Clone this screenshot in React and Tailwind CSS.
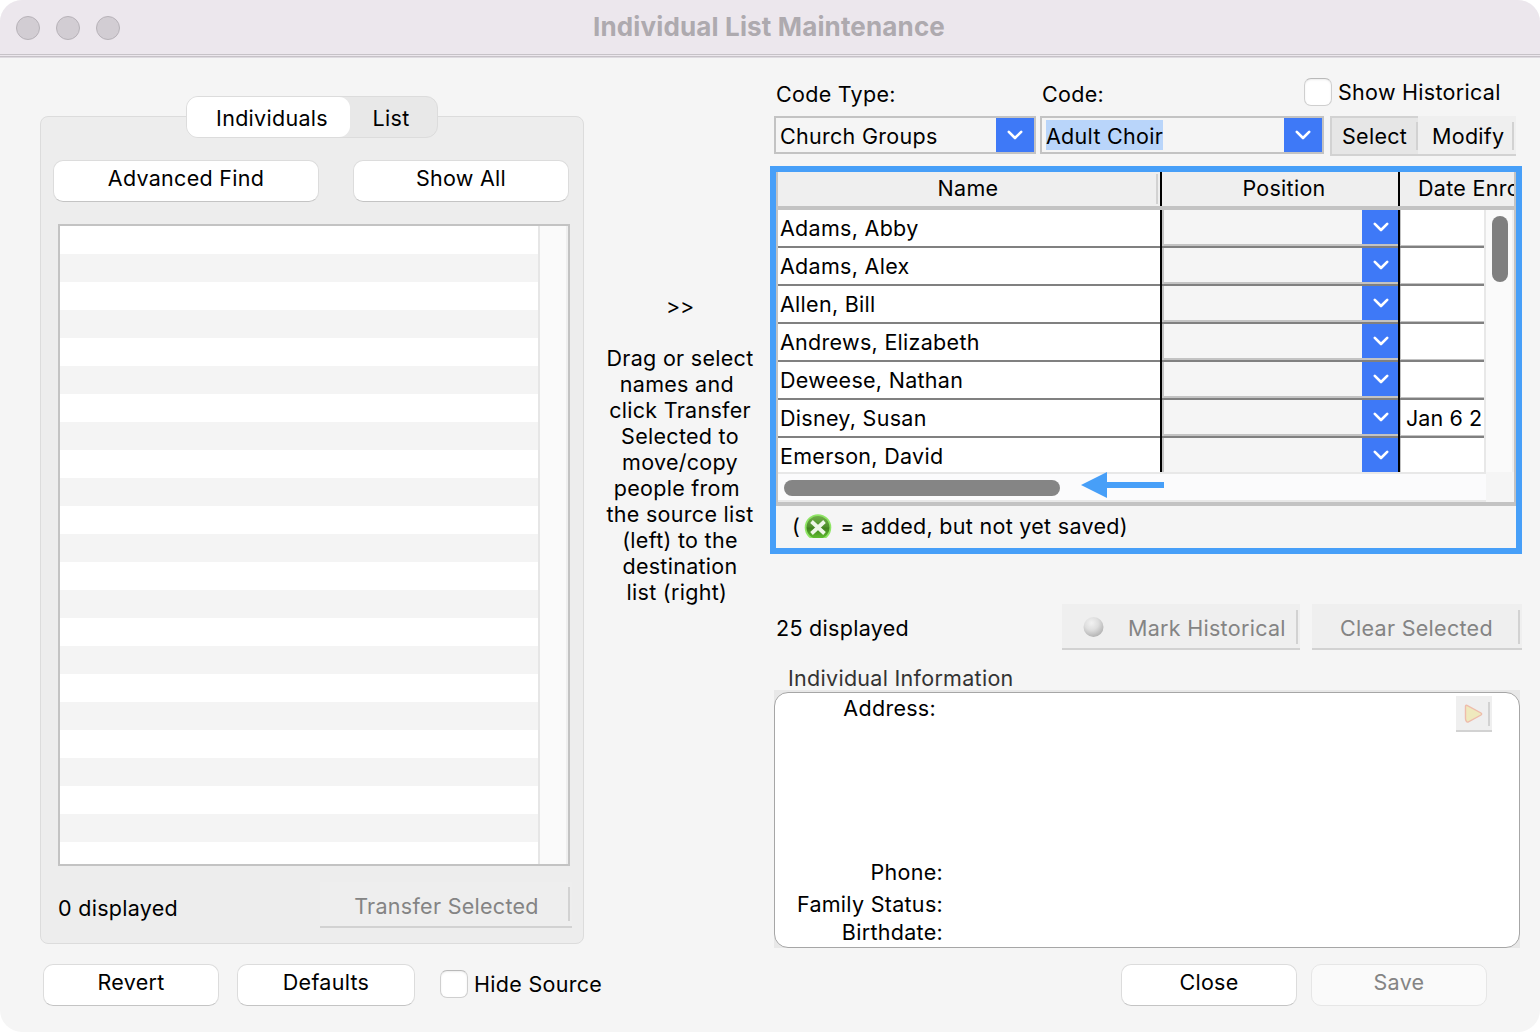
import React from "react";

const people = [
  { name: "Adams, Abby", date: "" },
  { name: "Adams, Alex", date: "" },
  { name: "Allen, Bill", date: "" },
  { name: "Andrews, Elizabeth", date: "" },
  { name: "Deweese, Nathan", date: "" },
  { name: "Disney, Susan", date: "Jan 6 2" },
  { name: "Emerson, David", date: "" },
];

const hint = [
  "Drag or select",
  "names and ",
  "click Transfer",
  "Selected to",
  "move/copy",
  "people from ",
  "the source list",
  "(left) to the",
  "destination",
  "list (right) ",
];

function Chevron() {
  return (
    <svg width="16" height="10" viewBox="0 0 16 10" fill="none" className="block">
      <path d="M1.8 1.8 L8 8 L14.2 1.8" stroke="#fff" strokeWidth="2.6" strokeLinecap="round" strokeLinejoin="round" />
    </svg>
  );
}

function PushButton({ children, className, disabled }) {
  return (
    <button
      className={`flex h-[42px] justify-center rounded-[10px] border pt-[3px] leading-[28px] ${
        disabled
          ? "border-[#e6e6e6] bg-[#fafafa] text-[#848484]"
          : "border-[#dcdcdc] border-b-[#c4c4c4] bg-white text-black"
      } ${className}`}
    >
      {children}
    </button>
  );
}

function Checkbox({ label, className }) {
  return (
    <label className={`flex items-center gap-[6px] ${className}`}>
      <span className="size-7 shrink-0 rounded-[7px] border border-[#cfcfcf] border-t-[#b9b9b9] bg-white shadow-[inset_0_1px_2px_rgba(0,0,0,0.08)]" />
      <span>{label}</span>
    </label>
  );
}

function FlatButton({ children, className, lineClass }) {
  return (
    <button className={`flex items-center justify-between border-b-2 border-[#d2d2d2] bg-[#efefef] text-[#848484] ${className}`}>
      {children}
      <span className={`w-[2px] shrink-0 bg-[#d2d2d2] ${lineClass}`} />
    </button>
  );
}

function Combo({ children, className }) {
  return (
    <div className={`flex h-[38px] border-2 border-[#c3c3c3] bg-[#f5f5f5] ${className}`}>
      <div className="flex flex-1 items-center pt-[2px] pl-[4px]">{children}</div>
      <div className="flex w-[38px] items-center justify-center bg-[#3e79f7]">
        <Chevron />
      </div>
    </div>
  );
}

function SourcePanel() {
  return (
    <section className="ml-10 w-[544px] shrink-0 pt-[38px]">
      <div className="relative ml-[146px] flex h-[42px] w-[252px] rounded-[12px] border border-[#dcdcdc] bg-[#e8e8e8] leading-[42px]">
        <div className="w-[163px] rounded-[11px] bg-white pl-[7px] text-center">Individuals</div>
        <div className="w-[82px] text-center">List</div>
      </div>
      <div className="-mt-[22px] h-[828px] rounded-[8px] border border-[#dcdcdc] bg-[#ededed] pt-[43px]">
        <div className="ml-3 flex gap-[34px]">
          <PushButton className="w-[266px]">Advanced Find</PushButton>
          <PushButton className="w-[216px]">Show All</PushButton>
        </div>
        <div className="mt-[22px] ml-[17px] flex h-[642px] w-[512px] border-2 border-[#c3c3c3]">
          <div className="flex-1 overflow-hidden">
            {Array.from({ length: 23 }, (_, i) => (
              <div key={i} className="h-7 odd:bg-white even:bg-[#f4f4f4]" />
            ))}
          </div>
          <div className="w-[30px] border-r-2 border-l-2 border-[#e6e6e6] border-r-[#efefef] bg-[#fafafa]" />
        </div>
        <div className="mt-[16px] ml-[17px] flex h-[46px] items-center justify-between pr-[11px]">
          <span className="mt-[7px]">0 displayed</span>
          <button className="flex h-[46px] w-[252px] items-center justify-between border-b-2 border-[#d2d2d2] bg-[#eeeeee] pr-[2px] text-[#848484]">
            <span className="flex-1 pt-[5px] pl-[5px] text-center">Transfer Selected</span>
            <span className="h-[34px] w-[2px] bg-[#d2d2d2]" />
          </button>
        </div>
      </div>
    </section>
  );
}

function Hint() {
  return (
    <section className="w-[190px] shrink-0 pt-[235px] pl-[2px] text-center leading-[26px]">
      <div className="tracking-[-0.3px]">&gt;&gt;</div>
      <div className="mt-[26px] whitespace-pre">
        {hint.map((line) => (
          <div key={line} className="-mx-5">{line}</div>
        ))}
      </div>
    </section>
  );
}

function CodeTable() {
  return (
    <div className="relative -ml-1 mt-[10px] h-[388px] w-[752px] border-6 border-[#479ff8] bg-[#f5f5f5]">
      <div className="flex h-[334px] flex-col border-r-2 border-b-4 border-l-2 border-[#c3c3c3]">
        <div className="flex h-[38px] shrink-0 overflow-hidden border-b-4 border-[#c3c3c3] bg-[#efefef] leading-[33px] whitespace-nowrap">
          <div className="flex w-[382px] shrink-0 py-[2px]">
            <span className="-mt-[2px] flex-1 pl-[2px] text-center">Name</span>
            <span className="mr-[2px] w-[2px] bg-[#d2d2d2]" />
          </div>
          <div className="w-[240px] shrink-0 border-r-2 border-l-2 border-black pl-[8px] text-center">Position</div>
          <div className="w-[114px] shrink-0 overflow-hidden pl-[18px]">Date Enrolled</div>
        </div>
        <div className="flex h-[262px] shrink-0">
          <div className="flex-1 overflow-hidden">
            {people.map((p) => (
              <div key={p.name} className="flex h-[38px] leading-[37px] whitespace-nowrap">
                <div className="w-[382px] shrink-0 border-b-2 border-[#808080] bg-white pl-[2px]">{p.name}</div>
                <div className="flex w-[240px] shrink-0 border-r-2 border-l-2 border-black">
                  <div className="flex-1 border-b-2 border-[#808080]">
                    <div className="flex h-[36px] border-b-2 border-l-2 border-[#c3c3c3] bg-[#f5f5f5]">
                      <div className="flex-1" />
                      <div className="flex w-9 items-center justify-center bg-[#3e79f7] pl-[2px]">
                        <Chevron />
                      </div>
                    </div>
                  </div>
                </div>
                <div className="w-[84px] shrink-0 overflow-hidden border-b-2 border-[#808080] bg-white">
                  <div className="h-[36px] border-b border-l border-[#c3c3c3] pl-[5px] tracking-[0.1px]">{p.date}</div>
                </div>
              </div>
            ))}
          </div>
          <div className="w-[30px] border-r-2 border-l-2 border-[#e8e8e8] border-r-[#f0f0f0] bg-[#fafafa] pt-[6px] pl-[6px]">
            <div className="h-[66px] w-4 rounded-full bg-[#7f7f7f]" />
          </div>
        </div>
        <div className="flex h-[30px] shrink-0">
          <div className="flex-1 border-t-2 border-b-2 border-[#e8e8e8] bg-[#fbfbfc] pt-[6px] pl-[6px]">
            <div className="h-4 w-[276px] rounded-full bg-[#858585]" />
          </div>
          <div className="w-7 bg-[#f5f5f5]" />
        </div>
      </div>
      <svg className="absolute top-[300px] left-[305px]" width="83" height="26" viewBox="0 0 83 26">
        <path d="M0 13 L26 0 V10 H83 V16 H26 V26 Z" fill="#479ff8" />
      </svg>
      <div className="flex h-[40px] items-center pl-[16px]">
        <span>(</span>
        <svg className="ml-[4px]" width="28" height="24" viewBox="0 0 28 24">
          <defs>
            <linearGradient id="disc" x1="0" y1="0" x2="0" y2="1">
              <stop offset="0" stopColor="#6fae48" />
              <stop offset="0.48" stopColor="#4f8f2c" />
              <stop offset="0.52" stopColor="#40801e" />
              <stop offset="1" stopColor="#63c332" />
            </linearGradient>
          </defs>
          <circle cx="14" cy="13.5" r="13.3" fill="#8fe565" />
          <circle cx="14" cy="13.5" r="11.5" fill="url(#disc)" />
          <path d="M7.5 7.5 L20.5 19.5 M20.5 7.5 L7.5 19.5" stroke="#eef6e8" strokeWidth="3.8" />
        </svg>
        <span className="ml-[8px]">= added, but not yet saved)</span>
      </div>
    </div>
  );
}

function InfoBox() {
  return (
    <>
      <div className="mt-[14px] ml-[14px] h-[26px] leading-[28px] text-[#333]">Individual Information</div>
      <div className="h-[258px] w-[746px] bg-[#e8e8e8] pt-[2px]">
        <div className="flex h-[256px] justify-between rounded-[14px] border border-[#a6a6a6] bg-white">
          <div className="flex w-[168px] flex-col text-right leading-[28px]">
            <span className="mt-[1px] pr-[7px]">Address:</span>
            <span className="mt-[136px]">Phone:</span>
            <span className="mt-[4px]">Family Status:</span>
            <span>Birthdate:</span>
          </div>
          <button className="mt-[3px] mr-[27px] flex h-9 w-9 items-center border-b-2 border-[#d2d2d2] bg-[#efefef] pt-[2px] pl-[8px]">
            <svg width="20" height="20" viewBox="0 0 20 20">
              <path d="M1.5 2.5 Q1.5 0.8 3 1.5 L17 9 Q18.3 10 17 11 L4 18 Q3 18.4 2.4 17.4 Q1.5 16 1.5 14.5 Z" fill="#efe9bd" stroke="#eebcab" strokeWidth="1.4" />
            </svg>
            <span className="ml-[4px] h-6 w-[2px] bg-[#d2d2d2]" />
          </button>
        </div>
      </div>
    </>
  );
}

function Destination() {
  return (
    <section className="w-[766px] shrink-0 pt-[20px]">
      <div className="flex h-[38px] items-center">
        <span className="w-[266px] pb-[6px] pl-[2px]">Code Type:</span>
        <span className="w-[264px] pb-[6px] pl-[2px]">Code:</span>
        <Checkbox label="Show Historical" className="-mt-[10px]" />
      </div>
      <div className="flex h-10 items-start">
        <Combo className="w-[262px]">Church Groups</Combo>
        <Combo className="ml-1 w-[284px]">
          <span className="-mt-[2px] h-[30px] bg-[#b9d5fa] leading-[33px]">Adult Choir</span>
        </Combo>
        <button className="ml-[6px] flex h-10 w-[88px] items-center justify-between border-2 border-r-0 border-[#d2d2d2] bg-[#e6e6e6] pl-[10px]">
          Select
          <span className="h-7 w-[2px] bg-[#d2d2d2]" />
        </button>
        <button className="flex h-10 w-[98px] items-center justify-between border-b-2 border-[#d2d2d2] bg-[#efefef] pt-[2px] pr-[2px] pl-[14px]">
          Modify
          <span className="h-7 w-[2px] bg-[#d2d2d2]" />
        </button>
      </div>
      <CodeTable />
      <div className="mt-[50px] flex h-[46px] items-center">
        <span className="w-[288px] pt-[2px] pl-[2px]">25 displayed</span>
        <FlatButton className="h-[46px] w-[238px] pr-[2px] pl-[20px]" lineClass="h-[34px] translate-y-[1px]">
          <svg width="22" height="22" viewBox="0 0 22 22" className="mt-[1px]">
            <defs>
              <radialGradient id="ball" cx="0.4" cy="0.3" r="0.7">
                <stop offset="0" stopColor="#f2f2f2" />
                <stop offset="0.5" stopColor="#dedede" />
                <stop offset="1" stopColor="#b4b4b4" />
              </radialGradient>
            </defs>
            <circle cx="11.5" cy="11" r="10" fill="url(#ball)" />
          </svg>
          <span className="flex-1 pt-[4px] pl-[24px] text-left whitespace-nowrap">Mark Historical</span>
        </FlatButton>
        <FlatButton className="ml-3 h-[46px] w-[210px] pr-[2px]" lineClass="h-[34px] translate-y-[1px]">
          <span className="flex-1 pt-[4px] pl-[3px] text-center whitespace-nowrap">Clear Selected</span>
        </FlatButton>
      </div>
      <InfoBox />
    </section>
  );
}

export default function App() {
  return (
    <div className="h-[1032px] w-[1540px] overflow-hidden bg-white font-['Inter',sans-serif] text-[21.5px] tracking-[0.29px] text-black">
      <div className="h-full overflow-hidden rounded-[22px] bg-[#f5f5f5]">
        <header className="flex h-[58px] items-start border-b border-[#dedae0] bg-[#ece7ed]">
          <div className="flex h-[57px] w-full border-b-[3px] border-double border-[#c6c2c7]">
            <div className="flex w-[120px] shrink-0 gap-4 pt-4 pl-4">
              <span className="size-6 shrink-0 rounded-full border border-[#b7b2b8] bg-[#d2cdd3]" />
              <span className="size-6 shrink-0 rounded-full border border-[#b7b2b8] bg-[#d2cdd3]" />
              <span className="size-6 shrink-0 rounded-full border border-[#b7b2b8] bg-[#d2cdd3]" />
            </div>
            <h1 className="flex-1 pr-[122px] text-center text-[26px] leading-[54px] font-bold tracking-[0.15px] text-[#aeaaaf]">
              Individual List Maintenance
            </h1>
          </div>
        </header>
        <main className="flex h-[906px]">
          <SourcePanel />
          <Hint />
          <Destination />
        </main>
        <footer className="flex h-[42px] pl-[43px]">
          <PushButton className="w-[176px]">Revert</PushButton>
          <PushButton className="ml-[18px] w-[178px]">Defaults</PushButton>
          <Checkbox label="Hide Source" className="ml-[25px] w-[681px] -mt-[2px]" />
          <PushButton className="w-[176px]">Close</PushButton>
          <PushButton disabled className="ml-[14px] w-[176px]">Save</PushButton>
        </footer>
      </div>
    </div>
  );
}
